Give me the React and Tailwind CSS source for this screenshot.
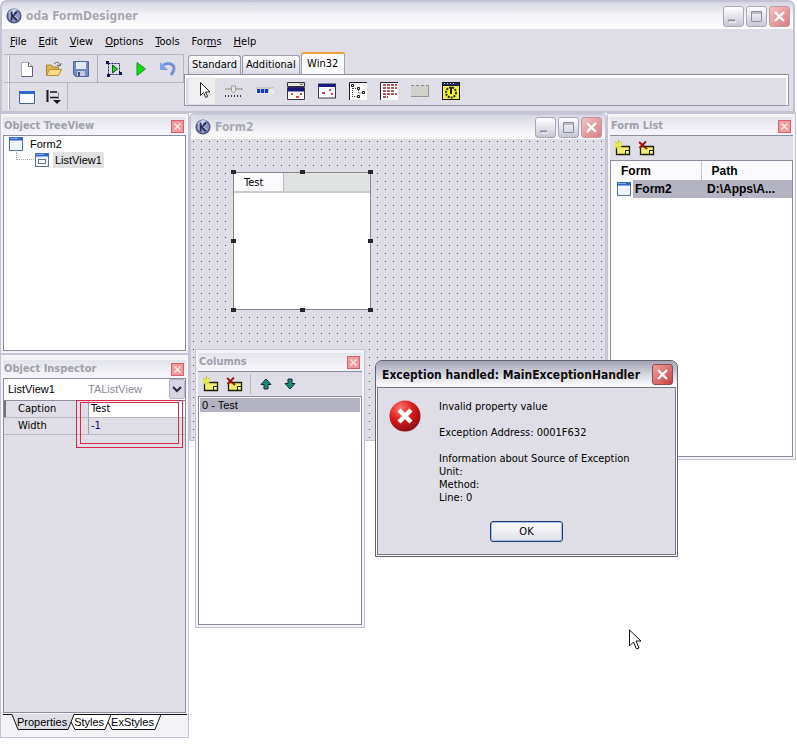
import React from "react";

const ui = "font-['DejaVu_Sans_Condensed','DejaVu_Sans',sans-serif]";
const sans = "font-['Liberation_Sans',Arial,sans-serif]";

function Logo() {
  return (
    <svg viewBox="0 0 16 16" className="h-4 w-4 shrink-0">
      <circle cx="8" cy="8" r="7.6" fill="#52587e" />
      <circle cx="8" cy="8" r="6" fill="#8d95c0" />
      <path d="M2 5a7 7 0 0 1 10-3L8 5z" fill="#c9cdea" />
      <path d="M5.500 3.500v9M11 3.500 6.500 8l4.500 4.500" fill="none" stroke="#2b3059" strokeWidth="1.800" />
      <path d="M7.500 4v2.500M4 5v6M9 8l3 3" stroke="#d5d9f2" strokeWidth=".8" />
    </svg>
  );
}

function CaptionButton({ kind, strong }) {
  const close = kind === "close";
  const tone = close
    ? strong
      ? "border-[#8c4850] bg-linear-to-br from-[#f0a0a0] to-[#c83c44]"
      : "border-[#c09aa4] bg-linear-to-br from-[#f2c4c4] to-[#d87c80]"
    : "border-[#a8a8b8] bg-linear-to-b from-white to-[#c8c8d6]";
  const label = close ? "Close" : kind === "max" ? "Maximize" : "Minimize";
  return (
    <button aria-label={label} className={`flex h-[21px] w-[21px] shrink-0 items-center justify-center rounded-[3px] border ${tone}`}>
      <svg viewBox="0 0 19 19" className="h-[19px] w-[19px]">
        {close && <path d="m5 5 9 9m0-9-9 9" stroke="#fff" strokeWidth="2.300" />}
        {kind === "max" && <path d="M4.500 4.500h10v10h-10zM4 6h11" fill="none" stroke="#8c8c9c" />}
        {kind === "min" && <path d="M4 13.500h7" stroke="#8c8ca0" strokeWidth="2" />}
        {kind === "min" && <path d="M5 15h7" stroke="#fff" />}
      </svg>
    </button>
  );
}

function SmallClose() {
  return (
    <button aria-label="Close" className="flex h-[13px] w-[13px] shrink-0 items-center justify-center border border-[#d4606c] bg-[#eb9c9c]">
      <svg viewBox="0 0 11 11" className="h-[11px] w-[11px]">
        <path d="m2.500 2.500 6 6m0-6-6 6" stroke="#fde8e4" strokeWidth="1.500" />
      </svg>
    </button>
  );
}

function ToolTitle({ children }) {
  return (
    <div className="flex h-[18px] items-center justify-between bg-linear-to-b from-[#e4e4ec] to-[#f6f6fa] pr-[2px]">
      <h2 className={`${ui} pl-px text-[11px] leading-4 font-bold text-[#a0a0a8]`}>{children}</h2>
      <SmallClose />
    </div>
  );
}

function ToolWindow({ title, className, children }) {
  return (
    <section className={`flex flex-col border border-[#c4c4d4] bg-[#f4f4f8] px-[2px] pb-[2px] ${className}`}>
      <ToolTitle>{title}</ToolTitle>
      {children}
    </section>
  );
}

function WindowIcon({ inner }) {
  return (
    <svg viewBox="0 0 16 14" className="h-[14px] w-4 shrink-0">
      <rect x="1.500" y=".5" width="13" height="13" fill="#eef4fb" stroke="#5d7291" />
      <path d="M1 2h14" stroke="#2d67c4" strokeWidth="3" />
      <path d="M2 1.500h8" stroke="#79aaf0" />
      {inner && <rect x="4.500" y="6.500" width="7" height="4" fill="#fff" stroke="#66788e" />}
    </svg>
  );
}

function ToolButton({ label, children, className = "" }) {
  return (
    <button aria-label={label} className={`flex h-6 w-6 shrink-0 items-center justify-center ${className}`}>
      <svg viewBox="0 0 18 18" className="h-[18px] w-[18px]">{children}</svg>
    </button>
  );
}

function Note() {
  return (
    <>
      <path d="M2.500 7.500h13v8h-13z" fill="#f2ee72" stroke="#1c1c08" strokeWidth="1.300" />
      <path d="M11.500 15v-3.500H15" fill="#fffde0" stroke="#1c1c08" />
    </>
  );
}

function AddItem() {
  return (
    <ToolButton label="Add">
      <Note />
      <path d="M4.500 1.500v9M0 6h9M1.500 3l6 6M7.500 3l-6 6" stroke="#e6ea50" strokeWidth="1.600" />
      <path d="M4.500 1v2.500M1 2.500 3 4.500M8 2.500l-1.500 1.500" stroke="#a0a634" strokeWidth=".8" />
    </ToolButton>
  );
}

function DeleteItem() {
  return (
    <ToolButton label="Delete">
      <Note />
      <path d="m1 3 8 7M8 2.500 1.500 9" stroke="#981008" strokeWidth="1.800" />
    </ToolButton>
  );
}

const Separator = () => <span className="mx-px h-full w-px shrink-0 bg-[#a8a8b4]" />;
const Grip = () => <span className="mr-[2px] h-full w-[2px] shrink-0 border-x border-l-white border-r-[#a8a8b4]" />;

const cursorPath = "M5.500 1.500v13l3-3 2.200 5 2-1-2.200-4.500h4.500z";

function MainMenu() {
  const items = [["F", "ile"], ["E", "dit"], ["V", "iew"], ["O", "ptions"], ["T", "ools"]];
  return (
    <nav className={`${ui} flex h-[25px] items-center gap-3 px-2 pt-px text-[11px] leading-4 text-black`}>
      {items.map(([a, b]) => (
        <button key={a}><u>{a}</u>{b}</button>
      ))}
      <button>For<u>m</u>s</button>
      <button><u>H</u>elp</button>
    </nav>
  );
}

function Toolbars() {
  return (
    <div className="flex w-[180px] shrink-0 flex-col border-t border-[#b4b4c0]">
      <div className="flex h-7 items-center gap-[3px] border-r border-b border-[#b4b4c0] pl-1">
        <Grip />
        <ToolButton label="New">
          <path d="M3.500 2.500h7l4 4v10h-11z" fill="#fff" stroke="#a8acb8" />
          <path d="M10.500 2.500v4h4v10h-11" fill="none" stroke="#5c6270" />
        </ToolButton>
        <ToolButton label="Open">
          <path d="M1.500 15V5h5l1 2h6v8z" fill="#e2b64e" stroke="#a98434" />
          <path d="m1.500 15.500 3-6h12l-3 6z" fill="#fbdc84" stroke="#b48c38" />
          <path d="M9 4c3-3 5-2 6 1m1.500-2L15 6l-3-1" fill="none" stroke="#626878" />
        </ToolButton>
        <ToolButton label="Save">
          <path d="M1.500 1.500h15v15h-13l-2-2z" fill="#7189c6" stroke="#50649a" />
          <path d="M4 2h10v7H4z" fill="#e6ebf8" />
          <path d="M5 11h8v5H5z" fill="#c3cadb" />
          <path d="M6 12h2v4H6z" fill="#435480" />
        </ToolButton>
        <Separator />
        <ToolButton label="Run form">
          <path d="M3.500 3.500h11v11h-11z" fill="none" stroke="#181858" strokeDasharray="2 1" />
          <path d="M1 1h3v3H1zM14 12h3v3h-3zM2 14h3v3H2z" fill="#111155" />
          <path d="m7.500 5 5 4-5 4z" fill="#26d82a" stroke="#095015" />
        </ToolButton>
        <ToolButton label="Run"><path d="M5 2.500 13.500 9 5 15.500z" fill="#15db18" stroke="#159222" /></ToolButton>
        <ToolButton label="Undo">
          <path d="M4 5c8-4 15 1 8 10" fill="none" stroke="#7191d5" strokeWidth="3" />
          <path d="M1 2v8h8z" fill="#7da2e3" />
        </ToolButton>
      </div>
      <div className="flex h-[27px] w-16 items-center gap-[3px] border-r border-[#b4b4c0] pl-1">
        <Grip />
        <ToolButton label="Window">
          <path d="M1.500 3.500h15v12h-15z" fill="#f7faff" stroke="#496390" />
          <path d="M1 4.500h16" stroke="#2e6acb" strokeWidth="3" />
        </ToolButton>
        <ToolButton label="Tab order">
          <path d="M2.500 2v12" stroke="#15151b" strokeWidth="2" />
          <path d="M5 4h7M5 9.500h9" stroke="#15151b" strokeWidth="1.500" />
          <path d="M13.500 4v7" stroke="#888" />
          <path d="M8 12h8l-4 4z" fill="#181818" />
        </ToolButton>
      </div>
    </div>
  );
}

function Palette() {
  return (
    <div className="flex min-w-0 flex-1 flex-col">
      <div role="tablist" className={`${ui} flex h-5 items-end gap-px pl-1 text-[11px] leading-4 text-black`}>
        <button role="tab" className="h-[19px] rounded-t-[3px] border border-b-0 border-[#9c9cac] bg-linear-to-b from-white to-[#dadae4] px-[3px]">Standard</button>
        <button role="tab" className="h-[19px] rounded-t-[3px] border border-b-0 border-[#9c9cac] bg-linear-to-b from-white to-[#dadae4] px-[3px]">Additional</button>
        <button role="tab" aria-selected="true" className="h-[22px] w-[44px] rounded-t-[3px] border border-t-2 border-b-0 border-[#a0a0b0] border-t-[#e9a33c] bg-[#fbfbfd]">Win32</button>
      </div>
      <div className="mr-1 flex h-8 items-center gap-[7px] border border-[#9898a8] border-t-[#8c8c9c] bg-[#dfdee6] pl-1 shadow-[inset_1px_3px_0_#fff,inset_-2px_0_0_#fff]">
        <button aria-label="Pointer" className="flex h-[27px] w-[26px] items-center justify-center bg-[#efeff1] pl-[3px]">
          <svg viewBox="0 0 18 18" className="h-[18px] w-[18px]"><path d={cursorPath} fill="#fff" stroke="#222" /></svg>
        </button>
        <div className="flex items-center gap-[7px] pt-px">
          <ToolButton label="Track bar">
            <path d="M0 7h18" stroke="#b2b2b8" strokeWidth="2" />
            <path d="M6.500 4h4v5l-2 2-2-2z" fill="#e6e6e0" stroke="#a2a29a" />
            <path d="M0 14h18" stroke="#34343c" strokeWidth="2" strokeDasharray="1 2" />
          </ToolButton>
          <ToolButton label="Progress bar">
            <path d="M0 6h18v6H0z" fill="#eeeef2" />
            <path d="M1 9h12" stroke="#1638c4" strokeWidth="4" strokeDasharray="3.300 .7" />
            <path d="M0 6h18" stroke="#b0b0b4" />
          </ToolButton>
          <ToolButton label="Date picker">
            <path d="M.500.500h17v4H.500z" fill="#e6e6df" stroke="#333" />
            <path d="M.500 5.500h17v12H.500z" fill="#fff" stroke="#35344a" />
            <path d="M1 7.500h16" stroke="#161779" strokeWidth="4" />
            <path d="M4 12h2m7 0h2m-6 3h3" stroke="#dc4840" strokeWidth="2" />
            <path d="m13 1.500 1.500 1.500L16 1.500" fill="none" stroke="#333" />
          </ToolButton>
          <ToolButton label="Calendar">
            <path d="M0 1.500h18v15H0z" fill="#353548" />
            <path d="M1 2h16v13.500H1z" fill="#fff" />
            <path d="M1 3.500h16" stroke="#171884" strokeWidth="3" />
            <path d="M11 8h2M4 11h3m6 1h2" stroke="#dc4840" strokeWidth="2" />
          </ToolButton>
          <ToolButton label="Tree view">
            <path d="M0 0h18v18H0z" fill="#fff" />
            <path d="M.500 18V.500H18" stroke="#1b1b20" fill="none" />
            <path d="M3.500 4v10.500h4M4 6.500h4M9.500 8v3h4" stroke="#38383d" strokeDasharray="1 1" fill="none" />
            <path d="M2.500 2.500h2v2h-2zM8.500 5.500h2v2h-2zM8.500 13.500h2v2h-2zM13.500 9.500h2v2h-2z" fill="#fff" stroke="#191919" />
          </ToolButton>
          <ToolButton label="List view">
            <path d="M0 0h18v18H0z" fill="#fff" />
            <path d="M.500 18V.500H18" stroke="#25252a" fill="none" />
            <path d="M3 3h14M3 6h14M3 9h12M3 12h14M3 15h5" stroke="#8a2625" strokeWidth="1.500" strokeDasharray="3 1" />
          </ToolButton>
          <ToolButton label="Tool bar">
            <path d="M0 3h18v12H0z" fill="#d2d2ca" />
            <path d="M0 3.500h18" stroke="#888" strokeDasharray="3 2" />
            <path d="M0 14.500h17.500V3" fill="none" stroke="#97978e" />
          </ToolButton>
          <ToolButton label="Timer">
            <path d="M-2 0h22v18H-2z" fill="#181818" />
            <path d="M1 4h16v13H1z" fill="#eded52" />
            <path d="M1 2h16" stroke="#252a74" strokeWidth="2" />
            <path d="M2 1.500h12" stroke="#c8c8e8" strokeDasharray="1 2" />
            <circle cx="9" cy="10.500" r="5" fill="#f7f63d" stroke="#30300c" strokeWidth="2" strokeDasharray="2 1" />
            <path d="M9 5v7" stroke="#222" strokeWidth="2" />
          </ToolButton>
        </div>
      </div>
    </div>
  );
}

function MainWindow() {
  return (
    <header className="mr-[2px] rounded-t-[7px] border-2 border-[#c2c2d2] bg-[#dfdee6] pb-px">
      <div className="flex h-[27px] items-center gap-1 rounded-t-[5px] bg-linear-to-b from-[#d6d6e2] via-[#f4f4f8] to-white pt-px pr-[3px] pl-1">
        <Logo />
        <h1 className={`${ui} flex-1 text-xs leading-4 font-bold text-[#a8a8b0]`}>oda FormDesigner</h1>
        <div className="flex gap-[2px]">
          <CaptionButton kind="min" />
          <CaptionButton kind="max" />
          <CaptionButton kind="close" />
        </div>
      </div>
      <MainMenu />
      <div className="flex pl-[2px]">
        <Toolbars />
        <Palette />
      </div>
    </header>
  );
}

function TreeView() {
  return (
    <ToolWindow title="Object TreeView" className="h-[241px] pt-[3px]">
      <ul className={`${sans} flex-1 border border-[#8c8c9c] bg-white pl-1 text-[11px] leading-4 text-black`}>
        <li>
          <div className="flex items-center gap-[6px]"><WindowIcon />Form2</div>
          <ul>
            <li className="flex items-center pl-2">
              <span className="mb-2 h-2 w-[18px] border-b border-l border-dotted border-[#a8a8a8]" />
              <WindowIcon inner />
              <span className="ml-[3px] bg-[#e2e2e2] px-[2px]">ListView1</span>
            </li>
          </ul>
        </li>
      </ul>
    </ToolWindow>
  );
}

function Inspector() {
  return (
    <ToolWindow title="Object Inspector" className="h-[384px] pt-[5px]">
      <div className="relative flex flex-1 flex-col border border-[#8c8c9c] bg-[#dfdee6]">
        <div className={`${sans} relative flex h-[21px] bg-white text-[11px]`}>
          <select aria-label="Selected object" className="w-full appearance-none bg-white pl-1 text-black">
            <option>ListView1</option>
          </select>
          <span className="pointer-events-none absolute top-[2px] left-[84px] leading-4 text-[#8c8c94]">TAListView</span>
          <span className="pointer-events-none absolute top-0 right-0 flex h-5 w-4 items-center justify-center rounded-[2px] border border-[#b4b4c8] bg-[#d6d6e4]">
            <svg viewBox="0 0 10 8" className="h-2 w-[10px]"><path d="m1 2 4 4 4-4" fill="none" stroke="#2a2a38" strokeWidth="2" /></svg>
          </span>
        </div>
        <div className={`${ui} border-t border-[#8c8c9c] text-[11px] leading-4 text-black`}>
          <div className="flex h-[17px] border-b border-[#b8b8c0]">
            <label htmlFor="caption" className="w-[84px] border-l-2 border-[#707078] pl-3">Caption</label>
            <input id="caption" defaultValue="Test" className="min-w-0 flex-1 border-l border-[#a0a0a8] bg-white pl-[2px]" />
          </div>
          <div className="flex h-[17px] border-b border-[#b8b8c0]">
            <label htmlFor="width" className="w-[84px] pl-[14px]">Width</label>
            <input id="width" defaultValue="-1" className="min-w-0 flex-1 border-l border-[#a0a0a8] bg-transparent pl-[2px] text-[#000080]" />
          </div>
        </div>
        <div className="pointer-events-none absolute top-[21px] right-[2px] left-[72px] h-12 border border-[#d62a4a] px-[3px] pt-px">
          <div className="h-[42px] border border-[#d62a4a]" />
        </div>
      </div>
      <div role="tablist" className={`${sans} relative h-[22px] bg-[#f4f4f6] text-[11px] text-black`}>
        <svg viewBox="0 0 184 19" className="absolute top-0 left-0 h-[19px] w-[184px]">
          <path d="m9 1 6 16h50l6-16z" fill="#dfdee6" />
          <path d="m71 1-3 7 4 9h30l6-16zM108 1l-3 7 4 9h42l6-16z" fill="#fff" />
          <path d="M0 1.500h9l6 15h50l6-15H184M68 9l4 7.500h30l6-15M105 9l4 7.500h43l6-15" fill="none" stroke="#111" />
        </svg>
        <div className="relative flex gap-[7px] pt-px pl-[14px] leading-4">
          <button role="tab" aria-selected="true">Properties</button>
          <button role="tab">Styles</button>
          <button role="tab">ExStyles</button>
        </div>
      </div>
    </ToolWindow>
  );
}

const handles = [
  "-top-[3px] -left-[3px]", "-top-[3px] left-[66px]", "-top-[3px] -right-[3px]",
  "top-[66px] -left-[3px]", "top-[66px] -right-[3px]",
  "-bottom-[3px] -left-[3px]", "-bottom-[3px] left-[66px]", "-bottom-[3px] -right-[3px]",
];

function FormWindow() {
  return (
    <section className="flex h-[328px] min-w-0 flex-1 flex-col rounded-t-[5px] border-2 border-b border-[#c6c6d6] bg-white">
      <div className="flex h-6 items-center gap-1 rounded-t-[4px] bg-linear-to-b from-[#d8d8e4] to-white pr-[3px] pl-1">
        <Logo />
        <h2 className={`${ui} flex-1 text-xs leading-4 font-bold text-[#a8a8b0]`}>Form2</h2>
        <div className="flex gap-[2px]">
          <CaptionButton kind="min" />
          <CaptionButton kind="max" />
          <CaptionButton kind="close" />
        </div>
      </div>
      <div className="relative flex-1 bg-[#dfdee6] bg-[conic-gradient(from_0deg_at_1px_1px,transparent_75%,#40404c_0)] bg-[size:8px_8px] bg-[position:2px_2px]">
        <div className="absolute top-[33px] left-[42px] h-[138px] w-[138px] border border-[#85858f] bg-white">
          <div className={`${ui} flex h-5 border-b-2 border-[#c8ccca] bg-[#dfe3e1] text-[11px] text-black`}>
            <div className="h-[18px] w-[50px] border-r border-[#b8b8c0] bg-[#fafafc] pl-[10px] leading-5">Test</div>
          </div>
          {handles.map((place) => (
            <span key={place} className={`absolute h-1 w-[5px] bg-[#26262e] ${place}`} />
          ))}
        </div>
      </div>
    </section>
  );
}

function FormList() {
  return (
    <ToolWindow title="Form List" className="h-[347px] w-[189px] shrink-0 pt-[3px]">
      <div className="flex h-[25px] items-center border-t border-[#8c8c9c] bg-[#dfdee6] pl-px">
        <AddItem />
        <DeleteItem />
      </div>
      <div className="flex-1 border border-[#8c8c9c] bg-white">
        <table className={`${sans} w-full table-fixed border-collapse text-left text-xs text-black`}>
          <thead>
            <tr className="h-[19px] bg-[#fafafc]">
              <th className="w-[90px] border-r border-[#c4c4cc] p-0 pl-[10px] leading-4 font-bold">Form</th>
              <th className="p-0 pl-[10px] leading-4 font-bold">Path</th>
            </tr>
          </thead>
          <tbody>
            <tr className="h-[18px] bg-[#b4b3c1] font-bold">
              <td className="p-0"><span className="flex items-center gap-[3px] bg-linear-to-r from-white from-25% to-transparent to-25% pl-[5px] leading-[18px]"><WindowIcon />Form2</span></td>
              <td className="overflow-hidden p-0 pl-[6px] leading-4 whitespace-nowrap">D:\Apps\A...</td>
            </tr>
          </tbody>
        </table>
      </div>
    </ToolWindow>
  );
}

function ColumnsWindow() {
  return (
    <ToolWindow title="Columns" className="absolute top-[349px] left-[195px] h-[279px] w-[170px] pt-[3px]">
      <div className="flex h-[25px] items-center border-t border-[#8c8c9c] bg-[#dfdee6] pl-px">
        <AddItem />
        <DeleteItem />
        <span className="mx-[3px] h-5 w-px bg-[#b8b8c4]" />
        <ToolButton label="Move up"><path d="m9 4 5 5.500h-3V14H7V9.500H4z" fill="#23887a" stroke="#092f2d" /></ToolButton>
        <ToolButton label="Move down"><path d="m9 14 5-5.500h-3V4H7v4.500H4z" fill="#23887a" stroke="#092f2d" /></ToolButton>
      </div>
      <ul className={`${sans} flex-1 border border-[#8c8c9c] bg-white p-px text-[11px] text-black`}>
        <li className="h-[14px] bg-[#b4b3c1] pl-[2px] leading-[14px]">0 - Test</li>
      </ul>
    </ToolWindow>
  );
}

function ExceptionDialog() {
  return (
    <section role="dialog" aria-labelledby="error-title" className="absolute top-[360px] left-[375px] w-[303px] rounded-t-[7px] border border-[#62626e] bg-[#dfdee6] shadow-[inset_0_0_0_1px_#fff,inset_0_0_0_2px_#777784]">
      <div className="flex h-[26px] items-center justify-between rounded-t-[6px] bg-linear-to-b from-[#a2a2b4] via-[#d6d6e0] to-white pt-px pr-1 pl-[6px]">
        <h2 id="error-title" className={`${ui} text-xs leading-4 font-bold whitespace-nowrap text-[#0c0c10]`}>Exception handled: MainExceptionHandler</h2>
        <CaptionButton kind="close" strong />
      </div>
      <div className="mx-px border-t border-[#777784] px-3 pt-3 pb-[14px]">
        <div className="flex gap-[18px]">
          <svg viewBox="0 0 32 32" className="h-8 w-8 shrink-0">
            <defs>
              <radialGradient id="red" cx=".35" cy=".25" r=".8">
                <stop offset="0" stopColor="#ff7770" /><stop offset=".5" stopColor="#d91c1c" /><stop offset="1" stopColor="#850c12" />
              </radialGradient>
            </defs>
            <circle cx="16" cy="16" r="15.500" fill="url(#red)" />
            <path d="m10 10 12 12m0-12L10 22" stroke="#fff" strokeWidth="4.500" />
          </svg>
          <div className={`${ui} text-[11px] leading-[13px] text-black`}>
            <p>Invalid property value</p>
            <p className="mt-[13px]">Exception Address: 0001F632</p>
            <p className="mt-[13px]">Information about Source of Exception</p>
            <p>Unit:</p>
            <p>Method:</p>
            <p>Line: 0</p>
          </div>
        </div>
        <div className="mt-[17px] flex justify-center">
          <button className={`${ui} h-[21px] w-[73px] rounded-[3px] border border-[#1d3d70] bg-linear-to-b from-white to-[#dedee8] text-[11px] leading-4 text-black shadow-[inset_0_0_0_1px_#a8bfe8]`}>OK</button>
        </div>
      </div>
    </section>
  );
}

export default function App() {
  return (
    <main className="relative min-h-screen overflow-hidden bg-white">
      <MainWindow />
      <div className="mr-px flex items-start">
        <div className="flex w-[189px] shrink-0 flex-col">
          <TreeView />
          <Inspector />
        </div>
        <FormWindow />
        <FormList />
      </div>
      <ColumnsWindow />
      <ExceptionDialog />
      <svg viewBox="0 0 18 24" className="absolute top-[628px] left-[624px] h-6 w-[18px]">
        <path d="M5.500 2v16l4-4 3 7 2.500-1-3-7h5z" fill="#fff" stroke="#111" />
      </svg>
    </main>
  );
}
